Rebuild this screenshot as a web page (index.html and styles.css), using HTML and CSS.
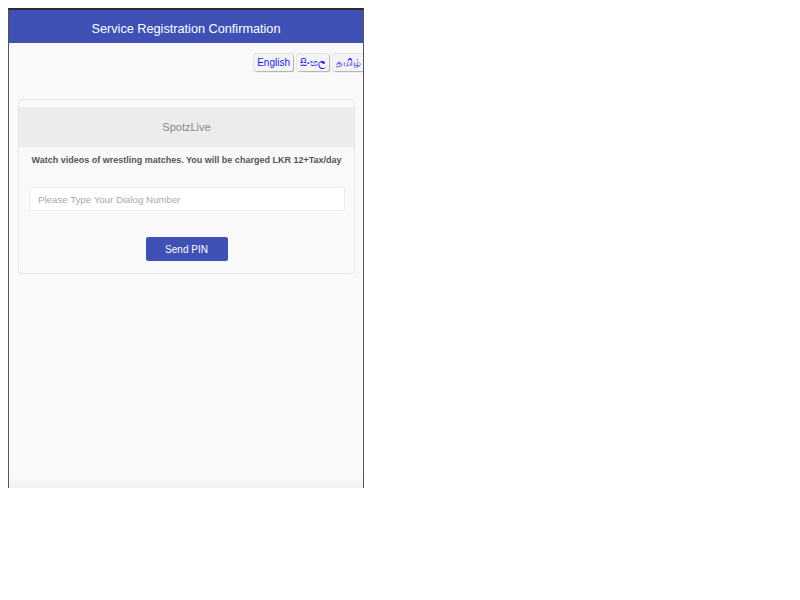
FILE: index.html
```html
<!DOCTYPE html>
<html>
<head>
<meta charset="utf-8">
<link rel="stylesheet" href="styles.css">
</head>
<body>
<div class="frame">
  <div class="header">Service Registration Confirmation</div>
  <div class="content">
    <div class="langs">
      <button class="lang">English</button>
      <button class="lang">සිංහල</button>
      <button class="lang">தமிழ்</button>
    </div>
    <div class="card">
      <div class="card-head">SpotzLive</div>
      <div class="desc">Watch videos of wrestling matches. You will be charged LKR 12+Tax/day</div>
      <input class="num" type="text" placeholder="Please Type Your Dialog Number">
      <div class="actions"><button class="send">Send PIN</button></div>
    </div>
  </div>
</div>
</body>
</html>
```
FILE: styles.css
```css
html, body { margin: 0; padding: 0; background: #fff; }
body { padding: 8px; font-family: "Liberation Sans", Arial, sans-serif; }
.frame {
  width: 354px;
  height: 478px;
  border-top: 2px solid #2a2a33;
  border-left: 1px solid #555;
  border-right: 1px solid #555;
  background: linear-gradient(to bottom, #f9f9f9 0, #f9f9f9 468px, #f1f1f1 478px);
  display: flex;
  flex-direction: column;
  overflow: hidden;
}
.header {
  height: 33px;
  box-sizing: border-box;
  padding-top: 4px;
  background: #3f51b5;
  color: #fff;
  font-size: 12.7px;
  display: flex;
  align-items: center;
  justify-content: center;
}
.content { padding: 0 0 0 9px; }
.langs {
  display: flex;
  justify-content: flex-end;
  gap: 4px;
  margin-top: 11px;
  margin-right: -1px;
}
.lang {
  font-family: "Liberation Sans", "Noto Sans", sans-serif;
  font-size: 10px;
  color: #1a1adf;
  background: #f4f4f6;
  border: none;
  border-radius: 2px;
  box-shadow: 1px 1px 1px #b0b0b0, 0 0 0 1px #e4e4e4;
  padding: 0 3px;
  height: 17px;
  line-height: 17px;
}
.card {
  width: 335px;
  margin-top: 28px;
  border: 1px solid #e6e6e6;
  border-radius: 4px;
  padding-top: 7px;
  padding-bottom: 12px;
  background: #f9f9f9;
}
.card-head {
  height: 40px;
  background: #ececec;
  color: #888;
  font-size: 11px;
  display: flex;
  align-items: center;
  justify-content: center;
}
.desc {
  text-align: center;
  font-size: 9px;
  font-weight: bold;
  color: #555;
  margin-top: 8px;
}
.num {
  display: block;
  box-sizing: border-box;
  width: 316px;
  height: 24px;
  margin: 22px 0 0 10px;
  border: 1px solid #eee;
  background: #fff;
  border-radius: 2px;
  padding: 0 8px;
  font-family: "Liberation Sans", Arial, sans-serif;
  font-size: 9.7px;
  outline: none;
}
.num::placeholder { color: #aaa; }
.actions { display: flex; justify-content: center; margin-top: 26px; }
.send {
  width: 82px;
  height: 24px;
  background: #3f51b5;
  color: #fff;
  border: none;
  border-radius: 2px;
  font-family: "Liberation Sans", Arial, sans-serif;
  font-size: 10px;
}
```
